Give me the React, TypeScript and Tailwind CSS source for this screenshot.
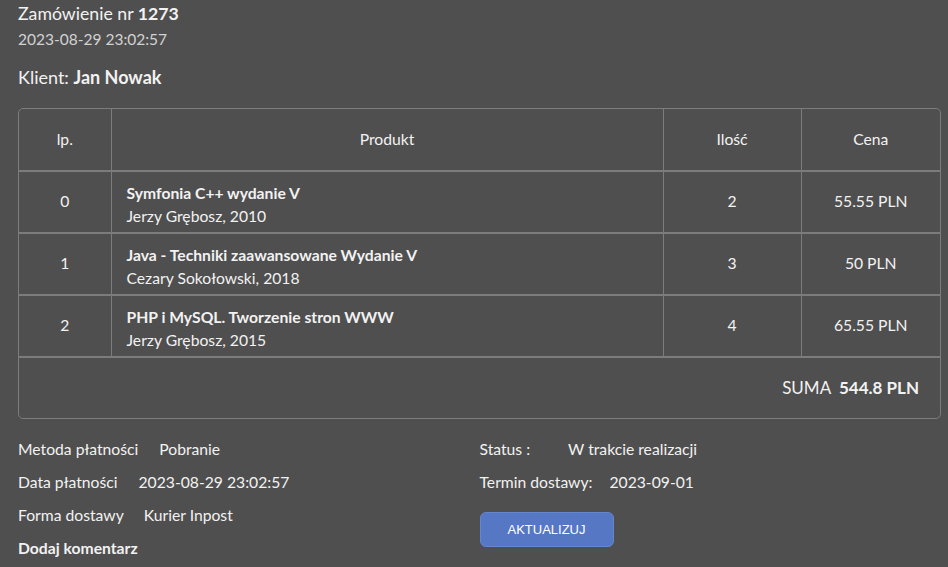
import React from "react";

const items = [
  { id: 0, title: "Symfonia C++ wydanie V", author: "Jerzy Grębosz, 2010", qty: 2, price: "55.55 PLN" },
  { id: 1, title: "Java - Techniki zaawansowane Wydanie V", author: "Cezary Sokołowski, 2018", qty: 3, price: "50 PLN" },
  { id: 2, title: "PHP i MySQL. Tworzenie stron WWW", author: "Jerzy Grębosz, 2015", qty: 4, price: "65.55 PLN" },
];

const App: React.FC = () => {
  return (
    <div
      className="min-h-screen w-full bg-[#4f4f4f] text-[#f2f2f2] pl-[18px] pr-[7px]"
      style={{ fontFamily: "Lato, 'Open Sans', sans-serif" }}
    >
      {/* Header */}
      <div className="pt-[1px]">
        <h1 className="text-[17.7px] leading-[26px]">
          Zamówienie nr <span className="font-bold">1273</span>
        </h1>
        <div className="text-[15.5px] leading-[24px] text-[#d2d2d2]">2023-08-29 23:02:57</div>
        <div className="mt-[13px] text-[18px] leading-[26px]">
          Klient: <span className="font-bold">Jan Nowak</span>
        </div>
      </div>

      {/* Table */}
      <div className="mt-[18px] border border-[#7c7c7c] rounded-[5px] overflow-hidden">
        <table className="w-full border-collapse text-[15.7px]">
          <thead>
            <tr className="h-[62px] border-b-2 border-[#7c7c7c]">
              <th className="w-[92px] font-normal text-center border-r border-[#7c7c7c]">lp.</th>
              <th className="font-normal text-center border-r border-[#7c7c7c]">Produkt</th>
              <th className="w-[138px] font-normal text-center border-r border-[#7c7c7c]">Ilość</th>
              <th className="w-[139px] font-normal text-center">Cena</th>
            </tr>
          </thead>
          <tbody>
            {items.map((item) => (
              <tr key={item.id} className="h-[62px] border-b-2 border-[#7c7c7c]">
                <td className="text-center border-r border-[#7c7c7c]">{item.id}</td>
                <td className="px-[15px] pt-[6px] border-r border-[#7c7c7c]">
                  <div className="font-bold leading-[23px]">{item.title}</div>
                  <div className="leading-[23px]">{item.author}</div>
                </td>
                <td className="text-center border-r border-[#7c7c7c]">{item.qty}</td>
                <td className="text-center">{item.price}</td>
              </tr>
            ))}
            <tr className="h-[61px]">
              <td colSpan={4} className="text-right pr-[21px] text-[17px]">
                SUMA <span className="ml-[4px] font-bold">544.8 PLN</span>
              </td>
            </tr>
          </tbody>
        </table>
      </div>

      {/* Details */}
      <div className="mt-[14px] grid grid-cols-2 text-[15.7px]">
        <div>
          <div className="leading-[33px]">
            Metoda płatności<span className="ml-[21px]">Pobranie</span>
          </div>
          <div className="leading-[33px]">
            Data płatności<span className="ml-[21px]">2023-08-29 23:02:57</span>
          </div>
          <div className="leading-[33px]">
            Forma dostawy<span className="ml-[20px]">Kurier Inpost</span>
          </div>
          <div className="leading-[33px] font-bold">Dodaj komentarz</div>
        </div>
        <div>
          <div className="leading-[33px]">
            Status :<span className="ml-[38px]">W trakcie realizacji</span>
          </div>
          <div className="leading-[33px]">
            Termin dostawy:<span className="ml-[17px]">2023-09-01</span>
          </div>
          <button
            className="mt-[13px] w-[134px] h-[35px] rounded-[6px] bg-[#5678c4] border border-[#6486cf] text-white text-[13px]"
            style={{ fontFamily: "'Liberation Sans', Arial, sans-serif" }}
          >
            AKTUALIZUJ
          </button>
        </div>
      </div>
    </div>
  );
};

export default App;
